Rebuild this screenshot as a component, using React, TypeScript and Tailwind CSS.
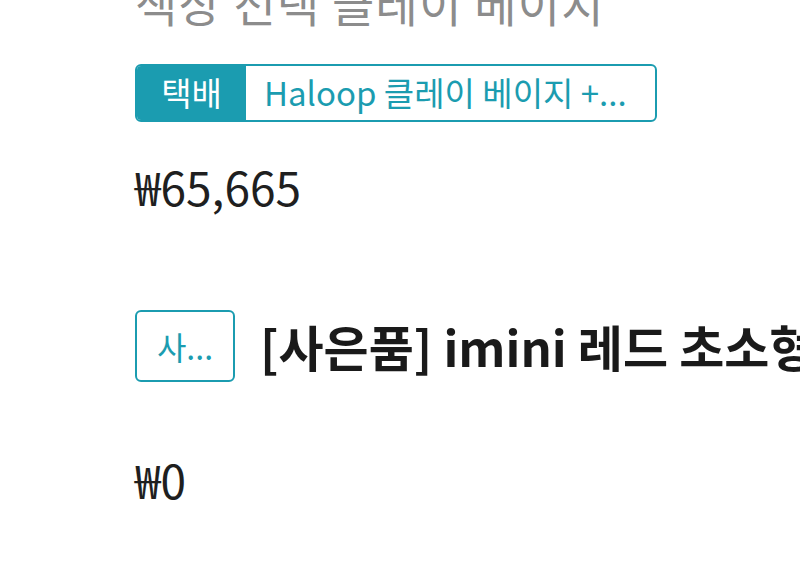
import React from "react";

const teal = "#1b9cb0";

export default function App() {
  return (
    <div
      className="w-[800px] h-[585px] overflow-hidden bg-white pl-[135px]"
      style={{ fontFamily: '"Noto Sans CJK KR", "Noto Sans", sans-serif' }}
    >
      <div className="-mt-[22px] text-[46px] leading-[48px] tracking-[1.2px] text-[#8c8c8c] whitespace-nowrap">
        색상 선택 클레이 베이지
      </div>

      <div className="mt-[38px] flex h-[58px] w-[522px] overflow-hidden rounded-[6px] border-2 border-[#1b9cb0]">
        <div className="flex w-[109px] items-center justify-center bg-[#1b9cb0] text-[33px] text-white">
          택배
        </div>
        <div className="flex flex-1 items-center pl-[18px] text-[33px] text-[#1b9cb0] whitespace-nowrap">
          Haloop 클레이 베이지 +...
        </div>
      </div>

      <div className="mt-[41px] text-[46px] leading-none text-[#1f1f1f]">₩65,665</div>

      <div className="mt-[100px] flex items-center gap-[25px] whitespace-nowrap">
        <div
          className="flex h-[72px] w-[100px] shrink-0 items-center justify-center rounded-[6px] border-2 text-[32px]"
          style={{ borderColor: teal, color: teal }}
        >
          사...
        </div>
        <div className="text-[49px] font-bold text-[#1a1a1a]">[사은품] imini 레드 초소형 미니</div>
      </div>

      <div className="mt-[73px] text-[46px] leading-none text-[#1f1f1f]">₩0</div>
    </div>
  );
}
